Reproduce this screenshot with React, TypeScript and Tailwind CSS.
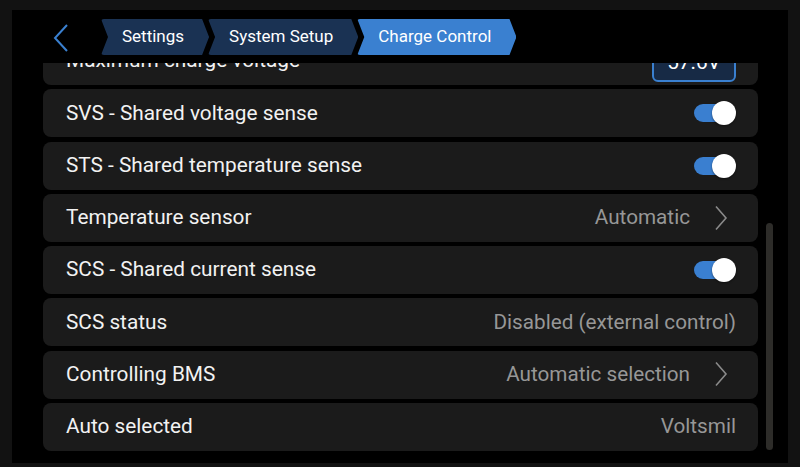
import React from "react";

const font = { fontFamily: "Roboto, 'Noto Sans', sans-serif" };

function Crumb({ label, active, first }: { label: string; active?: boolean; first?: boolean }) {
  return (
    <div
      className={
        "h-[36px] flex items-center pl-[21px] pr-[25px] text-[17px] text-white rounded-[3px] " +
        (active ? "bg-[#3a80d0]" : "bg-[#1a3253]") +
        (first ? "" : " -ml-[1px]")
      }
      style={{
        clipPath:
          "polygon(0 0, calc(100% - 7px) 0, 100% 50%, calc(100% - 7px) 100%, 0 100%, 7px 50%)",
      }}
    >
      {label}
    </div>
  );
}

function Toggle() {
  return (
    <div className="relative w-[42px] h-[26px] flex items-center">
      <div className="w-[40px] h-[18px] rounded-full bg-[#3a7fd0]" />
      <div className="absolute right-0 top-[1px] w-[24px] h-[24px] rounded-full bg-white shadow-[0_1px_2px_rgba(0,0,0,0.5)]" />
    </div>
  );
}

function Chevron() {
  return (
    <svg width="14" height="26" viewBox="0 0 14 26" className="ml-[24px] mr-[8px]">
      <path d="M2 1.5 L12 13 L2 24.5" fill="none" stroke="#8a8a8a" strokeWidth="1.6" />
    </svg>
  );
}

function Row({ label, children }: { label: string; children?: React.ReactNode }) {
  return (
    <div className="h-[48px] shrink-0 rounded-[8px] bg-[#1b1b1b] flex items-center justify-between pl-[23px] pr-[22px]">
      <span className="text-[20.8px] text-[#f2f2f2]">{label}</span>
      <div className="flex items-center text-[20.7px] text-[#979797]">{children}</div>
    </div>
  );
}

export default function App() {
  return (
    <div className="w-[800px] h-[467px] bg-[#121212] pt-[10px] pl-[12px] pr-[12px] pb-[4px] overflow-hidden" style={font}>
      <div className="w-full h-full bg-black flex flex-col">
        <div className="h-[53px] shrink-0 flex items-start relative z-10 bg-black">
          <svg width="20" height="30" viewBox="0 0 20 30" className="ml-[40px] mt-[13px]">
            <path d="M15 2 L3 15 L15 28" fill="none" stroke="#3a80d0" strokeWidth="2" />
          </svg>
          <div className="flex ml-[29px] mt-[9px]">
            <Crumb label="Settings" first />
            <Crumb label="System Setup" />
            <Crumb label="Charge Control" active />
          </div>
        </div>
        <div className="flex-1 flex overflow-hidden">
          <div className="ml-[31px] w-[715px] flex flex-col gap-[4.25px] mt-[-26px]">
            <Row label="Maximum charge voltage">
              <div className="w-[84px] h-[38px] rounded-[6px] border-2 border-[#3a80d0] bg-[#172a45] text-white flex items-center justify-center mt-[4px]">
                57.6V
              </div>
            </Row>
            <Row label="SVS - Shared voltage sense">
              <Toggle />
            </Row>
            <Row label="STS - Shared temperature sense">
              <Toggle />
            </Row>
            <Row label="Temperature sensor">
              <span>Automatic</span>
              <Chevron />
            </Row>
            <Row label="SCS - Shared current sense">
              <Toggle />
            </Row>
            <Row label="SCS status">
              <span>Disabled (external control)</span>
            </Row>
            <Row label="Controlling BMS">
              <span>Automatic selection</span>
              <Chevron />
            </Row>
            <Row label="Auto selected">
              <span>Voltsmil</span>
            </Row>
          </div>
          <div className="ml-[8px] mt-[160px] w-[7px] h-[227px] rounded-full bg-[#2d2c29]" />
        </div>
      </div>
    </div>
  );
}
